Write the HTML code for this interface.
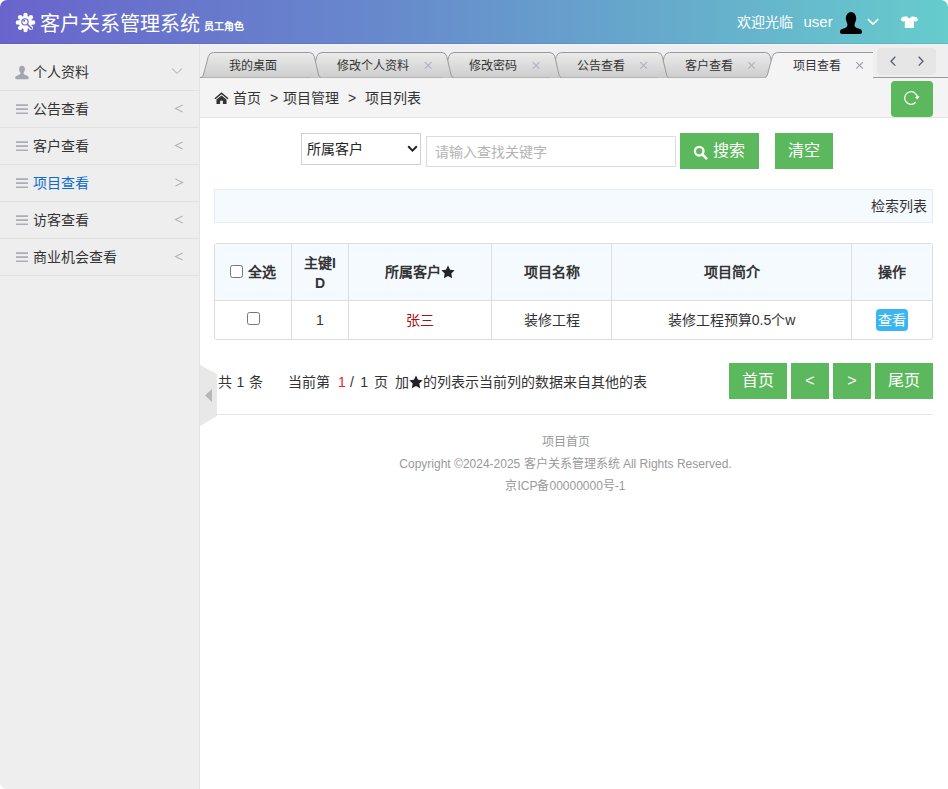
<!DOCTYPE html>
<html lang="zh-CN">
<head>
<meta charset="utf-8">
<title>客户关系管理系统</title>
<style>
*{box-sizing:border-box;}
html,body{margin:0;padding:0;}
body{width:948px;height:789px;overflow:hidden;background:#fff;font-family:"Liberation Sans",sans-serif;font-size:14px;color:#333;position:relative;}
#wrap{position:absolute;left:0;top:0;width:948px;height:789px;border-radius:7px;overflow:hidden;background:#fff;}
.abs{position:absolute;white-space:nowrap;}
/* header */
#hdr{position:absolute;left:0;top:0;width:948px;height:44px;background:linear-gradient(90deg,#6964cc 0%,#6789cc 40%,#66aacc 70%,#66cccc 100%);color:#fff;box-shadow:inset 0 -1px 0 rgba(30,40,140,.10);z-index:2;}
#logo{position:absolute;left:15px;top:12px;width:21px;height:21px;}
#title{position:absolute;left:40px;top:10px;font-family:"Liberation Serif",serif;font-size:20px;line-height:28px;white-space:nowrap;}
#role{position:absolute;left:204px;top:19px;font-size:10px;font-weight:bold;line-height:16px;white-space:nowrap;}
#welcome{position:absolute;left:737px;top:11px;font-size:14px;line-height:22px;white-space:nowrap;}
#uname{position:absolute;left:803.5px;top:11px;font-size:15px;line-height:22px;white-space:nowrap;}
#avatar{position:absolute;left:839px;top:11px;width:24px;height:24px;}
#chev{position:absolute;left:867px;top:18px;width:12px;height:8px;}
#shirt{position:absolute;left:900px;top:15px;width:19px;height:14px;}
/* sidebar */
#side{position:absolute;left:0;top:44px;width:200px;height:745px;background:#eeeeee;border-right:1px solid #e3e3e3;box-shadow:inset 0 1px 0 #f5f5f3;}
.mi{position:absolute;left:0;width:199px;height:38px;border-bottom:1px solid #e1e1e1;}
.mi .tx{position:absolute;left:33px;top:9px;font-size:14px;line-height:20px;color:#333;white-space:nowrap;}
.mi .ar{position:absolute;left:174px;top:12px;width:10px;height:12px;}
.mi .ic{position:absolute;left:15px;top:12px;width:14px;height:14px;}
.mi.on .tx{color:#0d6bd0;}
/* main */
#main{position:absolute;left:200px;top:44px;width:748px;height:745px;background:#fff;}
#tabs{position:absolute;left:0;top:0;width:748px;height:34px;background:#efeff1;box-shadow:inset 0 1px 0 #f6f5f5;}
#tabsvg{position:absolute;left:0;top:0;width:748px;height:34px;}
.tt{position:absolute;top:14px;font-size:12px;line-height:16px;color:#333;white-space:nowrap;}
.tx2{position:absolute;top:12px;font-size:13px;line-height:16px;color:#aab;white-space:nowrap;}
#navb{position:absolute;left:677px;top:4px;width:59px;height:27px;background:#e6e6e6;border-radius:4px;}
#crumb{position:absolute;left:0;top:34px;width:748px;height:40px;background:#f4f4f4;border-bottom:1px solid #e5e5e5;font-size:14px;line-height:20px;}
#refresh{position:absolute;left:691px;top:3px;width:42px;height:36px;background:#5cb85c;border-radius:4px;}
/* content coords are page-absolute inside #cont (offset -200,-44) */
#cont{position:absolute;left:-200px;top:-44px;width:948px;height:789px;}
.btn{position:absolute;background:#5cb85c;color:#fff;font-size:16px;line-height:36px;height:36px;text-align:center;white-space:nowrap;}
#sel{position:absolute;left:301px;top:133px;width:120px;height:32px;border:1px solid #d0d0d0;background:#fff;}
#inp{position:absolute;left:426px;top:136px;width:250px;height:31px;border:1px solid #ddd;background:#fff;}
#panel{position:absolute;left:214px;top:189px;width:719px;height:34px;background:#f5fafe;border:1px solid #e8ecef;}
#tbl{position:absolute;left:214px;top:243px;width:719px;height:97px;border:1px solid #ddd;border-radius:3px;background:#fff;overflow:hidden;}
#thead{position:absolute;left:0;top:0;width:717px;height:57px;background:#f5fafe;border-bottom:1px solid #ddd;}
.vl{position:absolute;top:0;width:1px;height:95px;background:#ddd;}
.th{position:absolute;font-weight:bold;font-size:14px;line-height:20px;text-align:center;color:#333;}
.td{position:absolute;font-size:14px;line-height:20px;text-align:center;color:#333;white-space:nowrap;}
.cb{position:absolute;width:13px;height:13px;border:1px solid #767676;border-radius:2.5px;background:#fff;}
#foot{position:absolute;left:199px;top:431px;width:733px;text-align:center;font-size:12px;line-height:22px;color:#999;}
</style>
</head>
<body>
<div id="wrap">
<div id="hdr">
  <svg id="logo" viewBox="0 0 20 20">
    <g fill="#fff">
      <circle cx="10" cy="10" r="6.400"/>
      <circle cx="10" cy="2.800" r="2.100"/><circle cx="10" cy="17.200" r="2.100"/>
      <circle cx="2.800" cy="10" r="2.100"/><circle cx="17.200" cy="10" r="2.100"/>
      <circle cx="4.900" cy="4.900" r="2.100"/><circle cx="15.100" cy="4.900" r="2.100"/>
      <circle cx="4.900" cy="15.100" r="2.100"/><circle cx="15.100" cy="15.100" r="2.100"/>
    </g>
    <circle cx="9.500" cy="9.400" r="3" fill="none" stroke="#6a65cc" stroke-width="1.100"/>
    <circle cx="8.700" cy="8.400" r="1" fill="#6a65cc"/>
    <path d="M11.700 11.700 L15.600 15.600" stroke="#6a65cc" stroke-width="1.500" stroke-linecap="round"/>
  </svg>
  <div id="title">客户关系管理系统</div>
  <div id="role">员工角色</div>
  <div id="welcome">欢迎光临</div>
  <div id="uname">user</div>
  <svg id="avatar" viewBox="0 0 24 24"><ellipse cx="12" cy="7.600" rx="5.200" ry="6.700" fill="#000"/><path fill="#000" d="M8.400 11.500 C8.600 15.300 8.200 16.200 6 17 L3 18.100 C1.500 18.700 1 19.700 1 20.900 C1 22.200 1.800 22.900 2.900 22.900 H21.100 C22.200 22.900 23 22.200 23 20.900 C23 19.700 22.500 18.700 21 18.100 L18 17 C15.800 16.200 15.400 15.300 15.600 11.500 Z"/></svg>
  <svg id="chev" viewBox="0 0 12 8"><path d="M1.300 1.500 L6 6.200 L10.700 1.500" fill="none" stroke="#fff" stroke-width="1.700" stroke-linecap="round" stroke-linejoin="round"/></svg>
  <svg id="shirt" viewBox="0 0 19 14"><path fill="#fff" d="M6.700 1.300 L9.300 3.400 L11.900 1.300 L15.600 1.900 C16.800 2.200 17.500 3 17.800 4.200 L17.900 5.200 L15.500 6.700 L13.900 5.700 V12.900 H4.800 V5.700 L3.200 6.700 L.8 5.200 L.9 4.200 C1.200 3 1.900 2.200 3.100 1.800 Z"/></svg>
</div>

<div id="side">
  <div class="mi" style="top:9px">
    <svg class="ic" style="top:11.500px;height:15px" viewBox="0 0 14 14" preserveAspectRatio="none"><path fill="#a3a6b0" d="M7 .6c1.900 0 2.900 1.400 2.900 3.200 0 1.300-.5 2.500-1.200 3.200-.3.300-.3 1 0 1.400.5.500 1.500 1 2.900 1.500 1.300.5 2 1 2.100 2 .1.800-.2 1.400-.9 1.500H1.200c-.7-.1-1-.7-.9-1.500.1-1 .8-1.500 2.100-2 1.400-.5 2.400-1 2.900-1.500.3-.4.300-1.100 0-1.400C4.600 6.300 4.100 5.100 4.100 3.800 4.100 2 5.100.6 7 .6z"/></svg>
    <span class="tx">个人资料</span>
    <svg class="ar" style="left:171px;top:14px;width:12px;height:8px" viewBox="0 0 12 8"><path d="M1 1.300 L6 6.300 L11 1.300" fill="none" stroke="#b9bcc2" stroke-width="1.100"/></svg>
  </div>
  <div class="mi" style="top:46px">
    <svg class="ic" viewBox="0 0 14 14"><path fill="#a9aeb6" d="M1 2.200h12v1.700H1zM1 6.300h12v1.700H1zM1 10.400h12v1.700H1z"/></svg>
    <span class="tx">公告查看</span>
    <svg class="ar" viewBox="0 0 10 12"><path d="M8.600 3.100 L1.500 6.500 L8.600 9.900" fill="none" stroke="#b4b4b8" stroke-width="1.100"/></svg>
  </div>
  <div class="mi" style="top:83px">
    <svg class="ic" viewBox="0 0 14 14"><path fill="#a9aeb6" d="M1 2.200h12v1.700H1zM1 6.300h12v1.700H1zM1 10.400h12v1.700H1z"/></svg>
    <span class="tx">客户查看</span>
    <svg class="ar" viewBox="0 0 10 12"><path d="M8.600 3.100 L1.500 6.500 L8.600 9.900" fill="none" stroke="#b4b4b8" stroke-width="1.100"/></svg>
  </div>
  <div class="mi on" style="top:120px">
    <svg class="ic" viewBox="0 0 14 14"><path fill="#a9aeb6" d="M1 2.200h12v1.700H1zM1 6.300h12v1.700H1zM1 10.400h12v1.700H1z"/></svg>
    <span class="tx">项目查看</span>
    <svg class="ar" viewBox="0 0 10 12"><path d="M1.500 3.100 L8.600 6.500 L1.500 9.900" fill="none" stroke="#b4b4b8" stroke-width="1.100"/></svg>
  </div>
  <div class="mi" style="top:157px">
    <svg class="ic" viewBox="0 0 14 14"><path fill="#a9aeb6" d="M1 2.200h12v1.700H1zM1 6.300h12v1.700H1zM1 10.400h12v1.700H1z"/></svg>
    <span class="tx">访客查看</span>
    <svg class="ar" viewBox="0 0 10 12"><path d="M8.600 3.100 L1.500 6.500 L8.600 9.900" fill="none" stroke="#b4b4b8" stroke-width="1.100"/></svg>
  </div>
  <div class="mi" style="top:194px">
    <svg class="ic" viewBox="0 0 14 14"><path fill="#a9aeb6" d="M1 2.200h12v1.700H1zM1 6.300h12v1.700H1zM1 10.400h12v1.700H1z"/></svg>
    <span class="tx">商业机会查看</span>
    <svg class="ar" viewBox="0 0 10 12"><path d="M8.600 3.100 L1.500 6.500 L8.600 9.900" fill="none" stroke="#b4b4b8" stroke-width="1.100"/></svg>
  </div>
</div>

<div id="main">
  <div id="tabs">
    <svg id="tabsvg" viewBox="0 0 748 34">
      <defs>
        <linearGradient id="tg" x1="0" y1="0" x2="0" y2="1"><stop offset="0" stop-color="#ebebeb"/><stop offset="1" stop-color="#cdcdcd"/></linearGradient>
      </defs>
      <line x1="0" y1="33.500" x2="748" y2="33.500" stroke="#9a9a9a" stroke-width="1"/>
      <path d="M457.0 33.5 Q458.6 33.2 459.4 31.0 L464.3 12.5 Q465.6 8.5 469.5 8.5 L565.5 8.5 Q569.2 8.5 570.3 12.5 L574.6 31.0 Q575.3 33.2 576.8 33.5 Z" fill="url(#tg)"/><path d="M457.0 33.5 Q458.6 33.2 459.4 31.0 L464.3 12.5 Q465.6 8.5 469.5 8.5 L565.5 8.5 Q569.2 8.5 570.3 12.5 L574.6 31.0 Q575.3 33.2 576.8 33.5" fill="none" stroke="#9a9a9a" stroke-width="1"/><path d="M548.3 18.1 L554.9 24.7 M554.9 18.1 L548.3 24.7" stroke="#aeb4c0" stroke-width="1.2" fill="none"/>
      <path d="M349.0 33.5 Q350.6 33.2 351.4 31.0 L356.3 12.5 Q357.6 8.5 361.5 8.5 L457.5 8.5 Q461.2 8.5 462.3 12.5 L466.6 31.0 Q467.3 33.2 468.8 33.5 Z" fill="url(#tg)"/><path d="M349.0 33.5 Q350.6 33.2 351.4 31.0 L356.3 12.5 Q357.6 8.5 361.5 8.5 L457.5 8.5 Q461.2 8.5 462.3 12.5 L466.6 31.0 Q467.3 33.2 468.8 33.5" fill="none" stroke="#9a9a9a" stroke-width="1"/><path d="M440.3 18.1 L446.9 24.7 M446.9 18.1 L440.3 24.7" stroke="#aeb4c0" stroke-width="1.2" fill="none"/>
      <path d="M241.5 33.5 Q243.1 33.2 243.9 31.0 L248.8 12.5 Q250.1 8.5 254.0 8.5 L350.0 8.5 Q353.7 8.5 354.8 12.5 L359.1 31.0 Q359.8 33.2 361.3 33.5 Z" fill="url(#tg)"/><path d="M241.5 33.5 Q243.1 33.2 243.9 31.0 L248.8 12.5 Q250.1 8.5 254.0 8.5 L350.0 8.5 Q353.7 8.5 354.8 12.5 L359.1 31.0 Q359.8 33.2 361.3 33.5" fill="none" stroke="#9a9a9a" stroke-width="1"/><path d="M332.8 18.1 L339.4 24.7 M339.4 18.1 L332.8 24.7" stroke="#aeb4c0" stroke-width="1.2" fill="none"/>
      <path d="M109.5 33.5 Q111.1 33.2 111.9 31.0 L116.8 12.5 Q118.1 8.5 122.0 8.5 L242.0 8.5 Q245.7 8.5 246.8 12.5 L251.1 31.0 Q251.8 33.2 253.3 33.5 Z" fill="url(#tg)"/><path d="M109.5 33.5 Q111.1 33.2 111.9 31.0 L116.8 12.5 Q118.1 8.5 122.0 8.5 L242.0 8.5 Q245.7 8.5 246.8 12.5 L251.1 31.0 Q251.8 33.2 253.3 33.5" fill="none" stroke="#9a9a9a" stroke-width="1"/><path d="M224.8 18.1 L231.4 24.7 M231.4 18.1 L224.8 24.7" stroke="#aeb4c0" stroke-width="1.2" fill="none"/>
      <path d="M1.0 33.5 Q2.6 33.2 3.4 31.0 L8.3 12.5 Q9.6 8.5 13.5 8.5 L109.5 8.5 Q113.2 8.5 114.3 12.5 L118.6 31.0 Q119.3 33.2 120.8 33.5 Z" fill="url(#tg)"/><path d="M1.0 33.5 Q2.6 33.2 3.4 31.0 L8.3 12.5 Q9.6 8.5 13.5 8.5 L109.5 8.5 Q113.2 8.5 114.3 12.5 L118.6 31.0 Q119.3 33.2 120.8 33.5" fill="none" stroke="#9a9a9a" stroke-width="1"/>
      <path d="M565.0 33.5 Q566.6 33.2 567.4 31.0 L572.3 12.5 Q573.6 8.5 577.5 8.5 L673.5 8.5 Q677.2 8.5 678.3 12.5 L682.6 31.0 Q683.3 33.2 684.8 33.5 Z" fill="#f4f4f4"/><path d="M565.0 33.5 Q566.6 33.2 567.4 31.0 L572.3 12.5 Q573.6 8.5 577.5 8.5 L673.5 8.5 Q677.2 8.5 678.3 12.5 L682.6 31.0 Q683.3 33.2 684.8 33.5" fill="none" stroke="#9a9a9a" stroke-width="1"/><rect x="566.2" y="33" width="117.4" height="1" fill="#f4f4f4"/><path d="M656.3 18.1 L662.9 24.7 M662.9 18.1 L656.3 24.7" stroke="#9aa0aa" stroke-width="1.2" fill="none"/>
      <rect x="673" y="0" width="75" height="34" fill="#efeff1"/><line x1="673" y1="33.5" x2="748" y2="33.5" stroke="#9a9a9a" stroke-width="1"/>
    </svg>
    <span class="tt" style="left:29px">我的桌面</span>
    <span class="tt" style="left:137px">修改个人资料</span>
    <span class="tt" style="left:269px">修改密码</span>
    <span class="tt" style="left:377px">公告查看</span>
    <span class="tt" style="left:485px">客户查看</span>
    <span class="tt" style="left:593px">项目查看</span>
    <div id="navb">
      <svg style="position:absolute;left:0;top:0" width="59" height="27" viewBox="0 0 59 27"><path d="M18.300 8.800 L14 13.200 L18.300 17.600 M41.700 8.800 L46 13.200 L41.700 17.600" fill="none" stroke="#545c70" stroke-width="1.300"/></svg>
    </div>
  </div>
  <div id="crumb">
    <svg class="abs" style="left:14px;top:14px" width="15" height="12.500" viewBox="0 0 14 12" preserveAspectRatio="none"><path fill="#333" d="M7 .3 L13.600 6 L12.700 7 L7 2.200 L1.300 7 L.4 6 Z M7 3.300 L11.700 7.300 V11.500 H8.300 V8.300 H5.700 V11.500 H2.300 V7.300 Z"/></svg>
    <span class="abs" style="left:33px;top:10px">首页</span>
    <span class="abs" style="left:70px;top:10px">&gt;</span>
    <span class="abs" style="left:83px;top:10px">项目管理</span>
    <span class="abs" style="left:148px;top:10px">&gt;</span>
    <span class="abs" style="left:165px;top:10px">项目列表</span>
    <div id="refresh"><svg style="position:absolute;left:11.4px;top:8px" width="18" height="18" viewBox="0 0 18 18"><path d="M13.700 13.200 A6.300 6.300 0 1 1 15.300 8.700" fill="none" stroke="#fff" stroke-width="1.300"/><path d="M12.900 8.300 L17.600 6.900 L15.500 10.500 Z" fill="#fff"/></svg></div>
  </div>
  <div id="cont">
    <div id="sel"><span class="abs" style="left:5px;top:5px;font-size:14px;line-height:20px;color:#222">所属客户</span>
      <svg class="abs" style="left:105px;top:11px" width="11" height="8" viewBox="0 0 11 8"><path d="M1.200 1.300 L5.500 5.600 L9.800 1.300" fill="none" stroke="#222" stroke-width="2"/></svg></div>
    <div id="inp"><span class="abs" style="left:8px;top:5px;font-size:14px;line-height:20px;color:#b4b4b4">请输入查找关键字</span></div>
    <div class="btn" style="left:680px;top:133px;width:79px;text-align:left">
      <svg class="abs" style="left:13px;top:12px" width="15" height="15" viewBox="0 0 15 15"><circle cx="6.200" cy="6.200" r="4.300" fill="none" stroke="#fff" stroke-width="2.300"/><path d="M9.500 9.500 L13.300 13.300" stroke="#fff" stroke-width="2.600" stroke-linecap="round"/></svg>
      <span class="abs" style="left:33px;top:0">搜索</span></div>
    <div class="btn" style="left:775px;top:133px;width:58px">清空</div>
    <div id="panel"><span class="abs" style="right:5px;top:6px;font-size:14px;line-height:20px">检索列表</span></div>

    <div id="tbl">
      <div id="thead"></div>
      <div class="vl" style="left:76px"></div>
      <div class="vl" style="left:133px"></div>
      <div class="vl" style="left:276px"></div>
      <div class="vl" style="left:396px"></div>
      <div class="vl" style="left:636px"></div>
      <div class="cb" style="left:15px;top:21px"></div>
      <div class="th" style="left:33px;top:18px">全选</div>
      <div class="th" style="left:77px;top:9px;width:56px">主键I<br>D</div>
      <div class="th" style="left:134px;top:18px;width:142px">所属客户<svg style="display:inline-block;vertical-align:-2px" width="14" height="14" viewBox="0 0 14 14"><path fill="#222" d="M7 .4 L9.050 4.650 L13.700 5.300 L10.300 8.500 L11.150 13.150 L7 10.900 L2.850 13.150 L3.700 8.500 L.3 5.300 L4.950 4.650 Z"/></svg></div>
      <div class="th" style="left:277px;top:18px;width:119px">项目名称</div>
      <div class="th" style="left:397px;top:18px;width:239px">项目简介</div>
      <div class="th" style="left:637px;top:18px;width:80px">操作</div>
      <div class="cb" style="left:32px;top:68px"></div>
      <div class="td" style="left:77px;top:66px;width:56px">1</div>
      <div class="td" style="left:134px;top:66px;width:142px;color:#a11">张三</div>
      <div class="td" style="left:277px;top:66px;width:119px">装修工程</div>
      <div class="td" style="left:397px;top:66px;width:239px">装修工程预算0.5个w</div>
      <div class="abs" style="left:661px;top:65px;width:32px;height:22px;background:#3bb4f2;border-radius:4px;color:#fff;font-size:14px;line-height:22px;text-align:center">查看</div>
    </div>

    <svg class="abs" style="left:200px;top:364px" width="18" height="64" viewBox="0 0 18 64"><path d="M0 1 L17 10 V52 L0 62 Z" fill="#e8e8e8"/><path d="M12 25 L5 31.500 L12 38 Z" fill="#b7b7b7"/></svg>
    <span class="abs" style="left:218px;top:372px;line-height:20px;word-spacing:0.7px">共 1 条</span>
    <span class="abs" style="left:288px;top:372px;line-height:20px">当前第</span>
    <span class="abs" style="left:338px;top:372px;line-height:20px;color:#e22">1</span>
    <span class="abs" style="left:350px;top:372px;line-height:20px;word-spacing:2.5px">/ 1 页</span>
    <span class="abs" style="left:395px;top:372px;line-height:20px">加<svg style="display:inline-block;vertical-align:-2px" width="14" height="14" viewBox="0 0 14 14"><path fill="#222" d="M7 .4 L9.050 4.650 L13.700 5.300 L10.300 8.500 L11.150 13.150 L7 10.900 L2.850 13.150 L3.700 8.500 L.3 5.300 L4.950 4.650 Z"/></svg>的列表示当前列的数据来自其他的表</span>
    <div class="btn" style="left:729px;top:363px;width:58px">首页</div>
    <div class="btn" style="left:791px;top:363px;width:38px;font-size:16px">&lt;</div>
    <div class="btn" style="left:833px;top:363px;width:38px;font-size:16px">&gt;</div>
    <div class="btn" style="left:875px;top:363px;width:58px">尾页</div>
    <div class="abs" style="left:214px;top:414px;width:719px;height:1px;background:#e5e5e5"></div>
    <div id="foot">项目首页<br>Copyright ©2024-2025 客户关系管理系统 All Rights Reserved.<br>京ICP备00000000号-1</div>
  </div>
</div>
</div>
</body>
</html>
